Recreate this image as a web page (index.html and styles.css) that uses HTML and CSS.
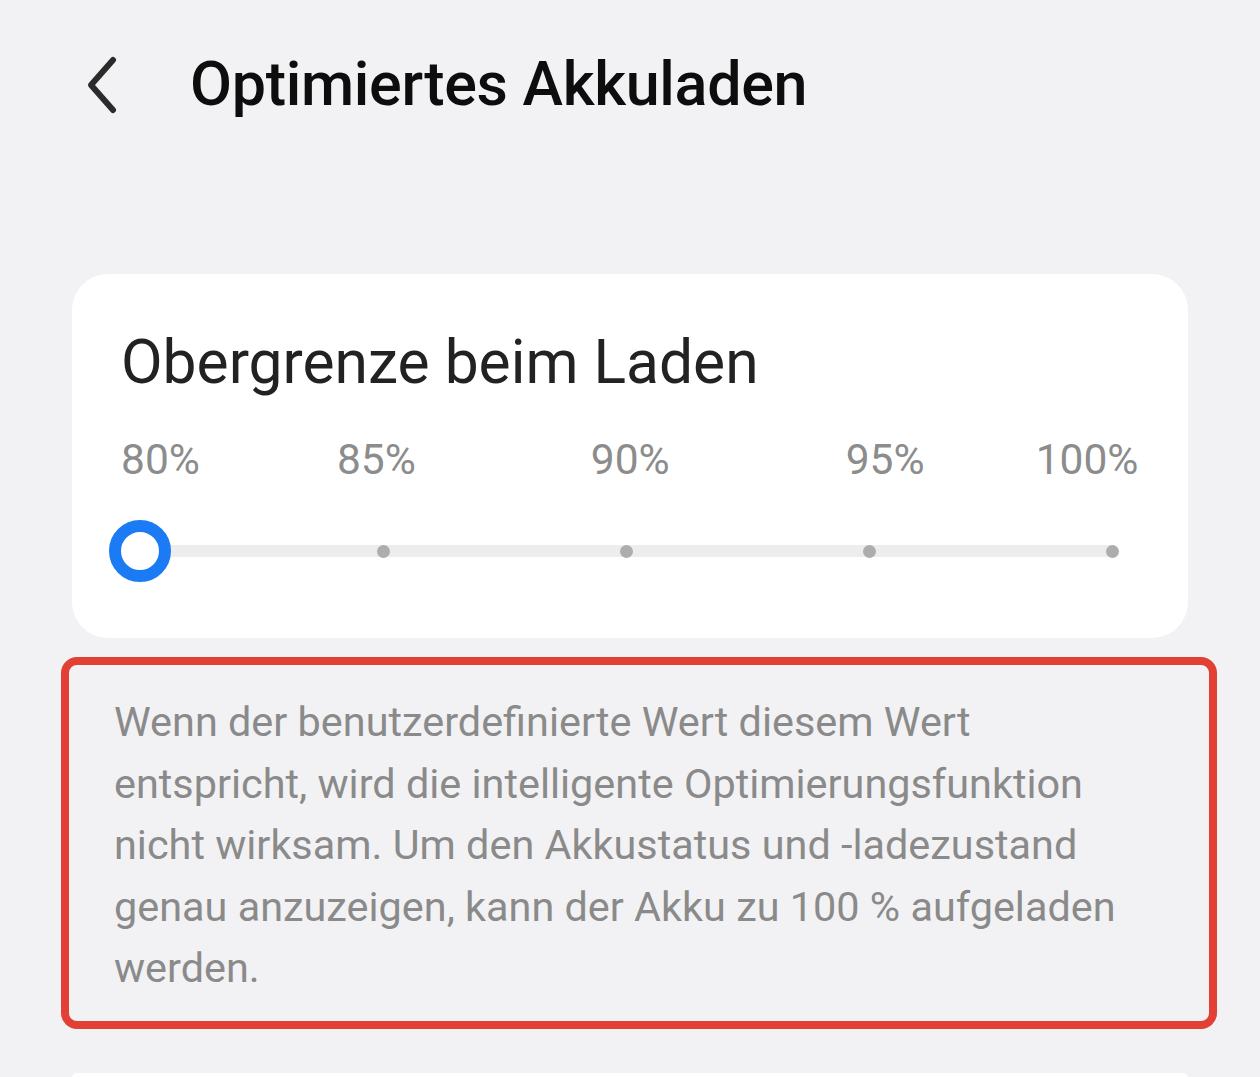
FILE: index.html
```html
<!DOCTYPE html>
<html lang="de">
<head>
<meta charset="utf-8">
<title>Optimiertes Akkuladen</title>
<link rel="stylesheet" href="styles.css">
</head>
<body>
<header class="topbar">
  <svg class="back" width="40" height="60" viewBox="0 0 40 60" aria-hidden="true">
    <polyline points="31,5 9,30 31,55" fill="none" stroke="#2b2b2b" stroke-width="6" stroke-linecap="round" stroke-linejoin="round"/>
  </svg>
  <h1 class="title">Optimiertes Akkuladen</h1>
</header>

<section class="card">
  <h2 class="card-title">Obergrenze beim Laden</h2>
  <div class="labels">
    <span class="lbl l1">80%</span>
    <span class="lbl l2">85%</span>
    <span class="lbl l3">90%</span>
    <span class="lbl l4">95%</span>
    <span class="lbl l5">100%</span>
  </div>
  <div class="slider">
    <div class="track"></div>
    <div class="stops">
      <div class="stop"><span class="thumb"></span></div>
      <div class="stop"><span class="dot"></span></div>
      <div class="stop"><span class="dot"></span></div>
      <div class="stop"><span class="dot"></span></div>
      <div class="stop"><span class="dot"></span></div>
    </div>
  </div>
</section>

<section class="note">
  <p>Wenn der benutzerdefinierte Wert diesem Wert entspricht, wird die intelligente Optimierungsfunktion nicht wirksam. Um den Akkustatus und -ladezustand genau anzuzeigen, kann der Akku zu 100&nbsp;% aufgeladen werden.</p>
</section>

<section class="card next"></section>
</body>
</html>
```

FILE: styles.css
```css
* { box-sizing: border-box; }
html, body { margin: 0; padding: 0; }
html { overflow: hidden; }
body {
  background: #f2f2f4;
  font-family: Roboto, "Noto Sans", sans-serif;
  width: 1260px;
  height: 1077px;
  overflow: hidden;
}
.topbar {
  display: flex;
  align-items: flex-start;
  height: 170px;
  padding: 54px 0 0 82px;
}
.back { flex: none; margin-top: 1px; }
.title {
  margin: 0 0 0 68px;
  font-size: 61px;
  font-weight: 500;
  color: #0d0d0d;
  line-height: 60px;
  letter-spacing: -0.3px;
}
.card {
  margin: 104px 72px 0 72px;
  background: #ffffff;
  border-radius: 36px;
  padding: 54px 48px 0 49px;
  height: 364px;
}
.card-title {
  margin: 0;
  font-size: 60.5px;
  font-weight: 400;
  color: #222;
  line-height: 70px;
}
.labels {
  display: flex;
  margin-top: 37px;
  font-size: 42.5px;
  color: #8c8c8c;
  line-height: 50px;
}
.lbl { display: block; }
.l2 { margin-left: 137px; }
.l3 { margin-left: 175px; }
.l4 { margin-left: 176px; }
.l5 { margin-left: 111px; }
.slider {
  position: relative;
  margin: 34px 0 0 19px;
  width: 972px;
  height: 64px;
}
.track {
  position: absolute;
  left: 0;
  right: -6px;
  top: 26px;
  height: 12px;
  border-radius: 6px;
  background: #ededed;
}
.stops {
  position: relative;
  display: flex;
  justify-content: space-between;
  align-items: center;
  height: 64px;
}
.stop {
  width: 0;
  display: flex;
  justify-content: center;
  align-items: center;
}
.dot {
  flex: none;
  width: 13px;
  height: 13px;
  border-radius: 50%;
  background: #adadad;
}
.thumb {
  flex: none;
  width: 62px;
  height: 62px;
  border-radius: 50%;
  border: 12px solid #1a7bf4;
  background: #fff;
}
.note {
  margin: 19px 43px 0 61px;
  border: 8px solid #e23f35;
  border-radius: 16px;
  padding: 27px 60px 26px 45px;
  height: 372px;
}
.note p {
  margin: 0;
  font-size: 41.4px;
  line-height: 61.5px;
  color: #8a8a8a;
}
.card.next {
  margin-top: 44px;
  height: 5px;
  padding: 0;
  border-radius: 36px 36px 0 0;
}
```
